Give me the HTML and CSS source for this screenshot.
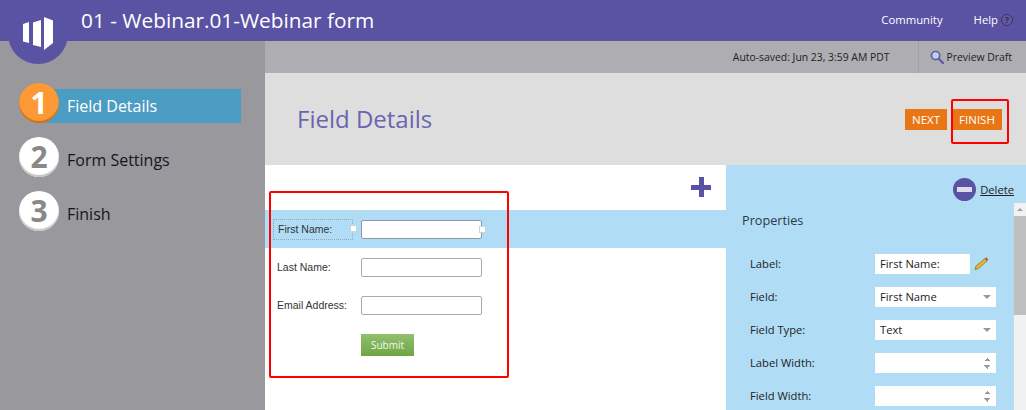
FILE: index.html
```html
<!DOCTYPE html>
<html lang="en">
<head>
  <meta charset="UTF-8">
  <title>Webinar form</title>
  <link rel="stylesheet" href="styles.css">
</head>
<body>
  <header class="topbar">
    <div class="logo">
      <svg width="30" height="33" viewBox="0 0 30 33">
        <path d="M0 7 L6 5 V26 L0 24.5 Z" fill="#fff"/>
        <path d="M10 5.5 L18 3 V30 L10 28 Z" fill="#fff"/>
        <path d="M21 0 L30 3.5 V26 L21 33 Z" fill="#fff"/>
      </svg>
    </div>
    <h1>01 - Webinar.01-Webinar form</h1>
    <nav class="topnav">
      <a>Community</a>
      <a class="help">Help <span class="help-icon">?</span></a>
    </nav>
  </header>

  <div class="layout">
    <aside class="sidebar">
      <div class="step active"><span class="num">1</span><span class="step-label">Field Details</span></div>
      <div class="step"><span class="num">2</span><span class="step-label">Form Settings</span></div>
      <div class="step"><span class="num">3</span><span class="step-label">Finish</span></div>
    </aside>

    <main class="main">
      <div class="savebar">
        <span class="saved">Auto-saved: Jun 23, 3:59 AM PDT</span>
        <span class="preview">
          <svg width="14" height="14" viewBox="0 0 15 15">
            <circle cx="6" cy="6" r="4.4" fill="#c9cde6" stroke="#5a64a8" stroke-width="1.8"/>
            <path d="M9.5 9.5 L14 14" stroke="#5a64a8" stroke-width="2.6" stroke-linecap="round"/>
          </svg>
          Preview Draft
        </span>
      </div>

      <div class="titleband">
        <h2>Field Details</h2>
        <div class="buttons">
          <button class="btn">NEXT</button>
          <button class="btn">FINISH</button>
        </div>
      </div>

      <div class="editor">
        <section class="canvas">
          <div class="addrow"><span class="plus"></span></div>
          <div class="formrow selected">
            <label class="flabel picked">First Name:<i class="handle"></i></label>
            <span class="finput">
              <i class="handle right"></i>
            </span>
          </div>
          <div class="formrow">
            <label class="flabel">Last Name:</label>
            <span class="finput"></span>
          </div>
          <div class="formrow">
            <label class="flabel">Email Address:</label>
            <span class="finput"></span>
          </div>
          <div class="submitrow"><button class="submit">Submit</button></div>
        </section>

        <section class="props">
          <div class="deleterow">
            <span class="minus"></span>
            <a class="delete">Delete</a>
          </div>
          <h3>Properties</h3>
          <div class="prop">
            <label>Label:</label>
            <span class="pfield short">First Name:</span>
            <svg class="pencil" width="15" height="14" viewBox="0 0 15 14">
              <path d="M1 13.5 L2 10 L11 2.5 L13 5 L4.5 12.5 Z" fill="#e6b52e" stroke="#8a6d1c" stroke-width=".7"/>
              <path d="M11 2.5 L12.5 1.2 L14.3 3.6 L13 5 Z" fill="#c0504d"/>
            </svg>
          </div>
          <div class="prop">
            <label>Field:</label>
            <span class="pfield">First Name<i class="caret"></i></span>
          </div>
          <div class="prop">
            <label>Field Type:</label>
            <span class="pfield">Text<i class="caret"></i></span>
          </div>
          <div class="prop">
            <label>Label Width:</label>
            <span class="pfield"><i class="spin"></i></span>
          </div>
          <div class="prop">
            <label>Field Width:</label>
            <span class="pfield"><i class="spin"></i></span>
          </div>
          <div class="scrollbar"><span class="thumb"></span></div>
        </section>
      </div>
    </main>
  </div>

  <!-- red annotation boxes -->
  <div class="mark mark-form"></div>
  <div class="mark mark-finish"></div>
</body>
</html>
```

FILE: styles.css
```css
:root {
  --purple: #5a52a3;
  --blue: #b0dcf6;
  --orange: #e97614;
  --font: 'Open Sans', Arial, sans-serif;
}
* { box-sizing: border-box; margin: 0; padding: 0 }
html, body { height: 410px; overflow: hidden; }
body {
  font-family: var(--font);
  color: #333;
  position: relative;
  background: #fff;
}

/* top bar */
.topbar {
  height: 41px;
  background: var(--purple);
  display: flex;
  align-items: center;
  padding-left: 81px;
  color: #fff;
  position: relative;
  z-index: 2;
}
.topbar h1 {
  font-size: 20.8px;
  font-weight: 400;
  flex: 1;
  margin-top: -2px;
}
.logo {
  position: absolute;
  left: 8px;
  top: 4px;
  width: 60px;
  height: 60px;
  border-radius: 50%;
  background: var(--purple);
  display: flex;
  align-items: center;
  justify-content: center;
}
.logo svg { margin-top: -1px; }
.topnav {
  display: flex;
  align-items: center;
  gap: 31px;
  padding-right: 13px;
  font-size: 11.3px;
  margin-top: -3px;
}
.help { display: flex; align-items: center; gap: 3px; }
.help-icon {
  width: 12px;
  height: 12px;
  margin-top: 2px;
  border-radius: 50%;
  background: #625c9f;
  border: 1px solid #38346f;
  color: #2f2b62;
  font-size: 9px;
  font-weight: 700;
  line-height: 10px;
  text-align: center;
}

.layout { display: flex; height: 369px; }

/* left steps */
.sidebar {
  width: 265px;
  flex: none;
  background: #99989c;
  padding: 42px 0 0 19px;
  display: flex;
  flex-direction: column;
  gap: 14px;
}
.step {
  display: flex;
  align-items: center;
  width: 222px;
  height: 40px;
  position: relative;
  color: #161616;
  font-size: 16px;
}
.step-label { padding-left: 8px; line-height: 34px; flex: 1; margin-top: 6px; }
.step.active .step-label {
  background: #4c9dc4;
  color: #fff;
  margin-left: -14px;
  padding-left: 22px;
}
.num {
  width: 40px;
  height: 40px;
  border-radius: 50%;
  background: #fff;
  box-shadow: inset 0 -2px 1px #c4c4c4;
  color: #888;
  font-size: 30px;
  font-weight: 700;
  line-height: 39px;
  text-align: center;
  flex: none;
  position: relative;
  z-index: 1;
}
.step.active .num {
  background: #fd9a35;
  box-shadow: inset 0 -2px 1px #c96f1b;
  color: #fff;
}

/* right side */
.main { flex: 1; display: flex; flex-direction: column; min-width: 0; }
.savebar {
  height: 32px;
  background: #aeadb1;
  display: flex;
  justify-content: flex-end;
  align-items: center;
  font-size: 10.4px;
  color: #222;
}
.saved { padding-right: 28px; }
.preview {
  height: 100%;
  border-left: 1px solid #a2a1a5;
  padding: 0 14px 0 11px;
  display: flex;
  align-items: center;
  gap: 3px;
}
.titleband {
  height: 92px;
  background: #dedede;
  display: flex;
  align-items: center;
  justify-content: space-between;
  padding: 0 24px 0 32px;
}
.titleband h2 {
  font-size: 24px;
  font-weight: 400;
  color: #6b64b0;
  margin-top: -2px;
}
.buttons { display: flex; gap: 5px; }
.btn {
  width: 42px;
  height: 21px;
  background: var(--orange);
  border: none;
  color: #fff;
  font-family: var(--font);
  font-size: 11.5px;
}
.btn:last-child { width: 50px; }

.editor { flex: 1; display: flex; min-height: 0; }

/* form canvas */
.canvas { width: 461px; flex: none; background: #fff; }
.addrow {
  height: 45px;
  display: flex;
  justify-content: flex-end;
  align-items: center;
  padding-right: 15px;
}
.plus {
  width: 20px;
  height: 20px;
  margin-bottom: 1px;
  background:
    linear-gradient(var(--purple), var(--purple)) center / 20px 5px no-repeat,
    linear-gradient(var(--purple), var(--purple)) center / 5px 20px no-repeat;
}
.formrow {
  height: 38px;
  display: flex;
  align-items: center;
  font-family: 'Liberation Sans', Arial, sans-serif;
  font-size: 10.5px;
  color: #333;
}
.formrow.selected { background: var(--blue); }
.flabel { width: 96px; padding-left: 12px; flex: none; }
.picked {
  position: relative;
  width: 80px;
  height: 21px;
  margin: 0 8px 0 8px;
  padding-left: 4px;
  line-height: 19px;
  border: 1px dotted #8fa9b8;
}
.finput {
  width: 121px;
  height: 19px;
  background: #fff;
  border: 1px solid #aaa;
  border-radius: 2px;
  position: relative;
}
.selected .finput { border-color: #8d9aa6; }
.handle {
  position: absolute;
  width: 7px;
  height: 7px;
  background: #fff;
  border: 1px solid #c6d3da;
  right: -5px;
  top: 5px;
}
.finput .handle { right: -5px; top: 5px; }
.submitrow { padding: 8px 0 0 96px; }
.submit {
  width: 53px;
  height: 22px;
  border: none;
  background: linear-gradient(#93c06f, #6da544);
  color: #f2f7ec;
  font-family: var(--font);
  font-size: 10px;
}

/* properties */
.props {
  flex: 1;
  background: var(--blue);
  position: relative;
  font-size: 11.2px;
  color: #222;
}
.deleterow {
  height: 38px;
  display: flex;
  justify-content: flex-end;
  align-items: center;
  gap: 4px;
  padding: 11px 12px 0 0;
}
.minus {
  width: 23px;
  height: 23px;
  border-radius: 50%;
  background: var(--purple);
  position: relative;
}
.minus::after {
  content: "";
  position: absolute;
  left: 4px;
  right: 4px;
  top: 9px;
  height: 5px;
  background: #dcdcec;
}
.delete { text-decoration: underline; color: #222; }
.props h3 {
  font-size: 12.7px;
  font-weight: 400;
  padding: 8px 0 0 16px;
  height: 44px;
  color: #2c3a44;
}
.prop {
  height: 33px;
  padding-left: 24px;
  display: flex;
  align-items: center;
}
.prop label { width: 125px; flex: none; }
.pfield {
  width: 121px;
  height: 20px;
  background: #fff;
  padding-left: 5px;
  line-height: 20px;
  position: relative;
}
.pfield.short { width: 95px; }
.pencil { margin-left: 4px; margin-top: -2px; }
.caret {
  position: absolute;
  right: 5px;
  top: 8px;
  border: 4px solid transparent;
  border-top: 4px solid #999;
  border-bottom: 0;
}
.spin {
  position: absolute;
  right: 5px;
  top: 4px;
  width: 7px;
  height: 12px;
  background:
    linear-gradient(to top left, #999 50%, transparent 50%) left top / 4px 4px no-repeat,
    linear-gradient(to top right, #999 50%, transparent 50%) right top / 4px 4px no-repeat,
    linear-gradient(to bottom left, #999 50%, transparent 50%) left bottom / 4px 4px no-repeat,
    linear-gradient(to bottom right, #999 50%, transparent 50%) right bottom / 4px 4px no-repeat;
}
.scrollbar {
  position: absolute;
  right: 0;
  top: 38px;
  bottom: 0;
  width: 12px;
  background: #f1f1f1;
  padding-top: 13px;
}
.scrollbar::before {
  content: "";
  position: absolute;
  left: 3px;
  top: 5px;
  border: 3px solid transparent;
  border-bottom: 3px solid #a0a0a0;
  border-top: 0;
}
.thumb { display: block; height: 99px; background: #bfbfbf; }

/* red annotation boxes */
.mark {
  position: absolute;
  border: 2px solid #f00;
  border-radius: 2px;
  z-index: 3;
}
.mark-form { left: 269px; top: 191px; width: 240px; height: 187px; }
.mark-finish { left: 951px; top: 99px; width: 58px; height: 45px; }
```
